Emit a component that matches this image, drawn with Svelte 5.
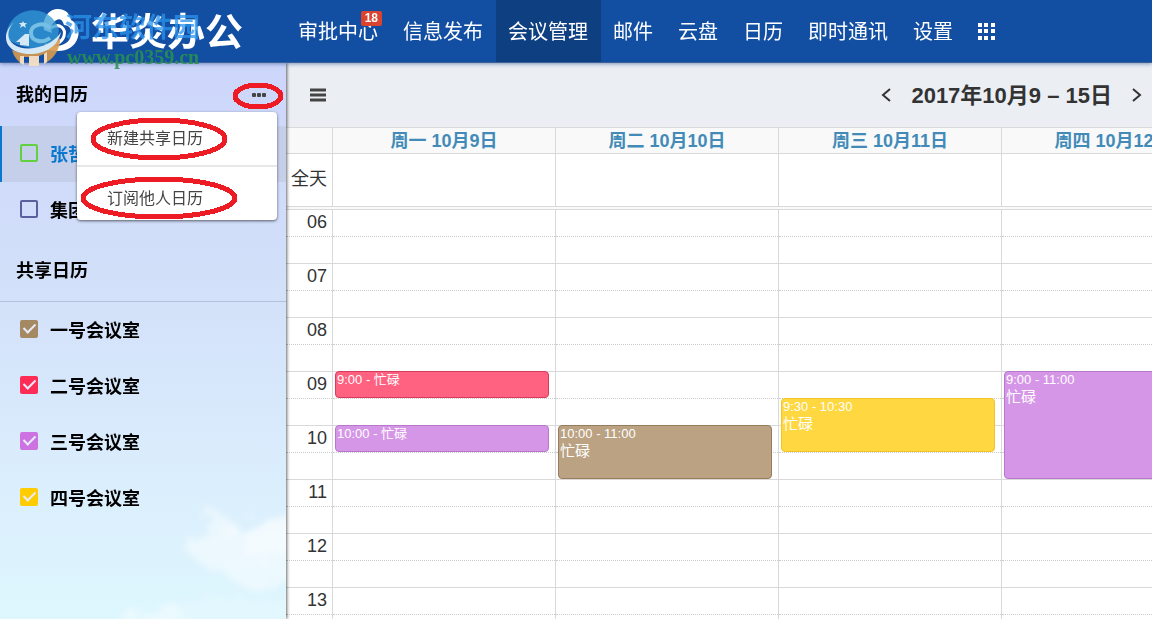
<script>
    const navItems = [
        { label: '审批中心', badge: 18 },
        { label: '信息发布' },
        { label: '会议管理', active: true },
        { label: '邮件' },
        { label: '云盘' },
        { label: '日历' },
        { label: '即时通讯' },
        { label: '设置' }
    ];

    let mine = $state([
        { name: '张哲', color: '#62d13f', checked: false, active: true },
        { name: '集团', color: '#5a5f9e', checked: false }
    ]);

    let shared = $state([
        { name: '一号会议室', color: '#a58963', checked: true },
        { name: '二号会议室', color: '#ff2d55', checked: true },
        { name: '三号会议室', color: '#cc73e1', checked: true },
        { name: '四号会议室', color: '#ffcc00', checked: true }
    ]);

    let menuOpen = $state(true);

    const firstHour = 6;
    const hours = ['06', '07', '08', '09', '10', '11', '12', '13', '14'];
    const hourHeight = 54;

    // start / end are in hours
    const days = [
        {
            title: '周一 10月9日',
            events: [
                { time: '9:00 - 忙碌', start: 9, end: 9.5, kind: 'red' },
                { time: '10:00 - 忙碌', start: 10, end: 10.5, kind: 'purple' }
            ]
        },
        {
            title: '周二 10月10日',
            events: [{ time: '10:00 - 11:00', title: '忙碌', start: 10, end: 11, kind: 'brown' }]
        },
        {
            title: '周三 10月11日',
            events: [{ time: '9:30 - 10:30', title: '忙碌', start: 9.5, end: 10.5, kind: 'yellow' }]
        },
        {
            title: '周四 10月12日',
            events: [{ time: '9:00 - 11:00', title: '忙碌', start: 9, end: 11, kind: 'purple' }]
        }
    ];

    // events cover the hour line they start on
    const top = (e) => (e.start - firstHour) * hourHeight - 1;
    const height = (e) => (e.end - e.start) * hourHeight;
</script>

<div class="app">
    <header class="topbar">
        <div class="brand">
            <svg class="brand-icon" width="84" height="70" viewBox="0 0 84 70" aria-hidden="true">
                <path d="M44 30 C42 16 50 9 58 9 C66 9 70 14 71 20 C77 23 80 30 78 37 C75 47 67 51 58 51 L46 50 L50 46 C62 47 70 43 71 35 C72 29 69 25 64 25 C62 18 58 18 54 22 C51 25 51 29 52 33 Z" fill="#fff" />
                <path d="M51 28 C60 22 66 29 64 36 C62 43 54 46 45 45" fill="none" stroke="#fff" stroke-width="3" />
                <path d="M6 38 A27 27 0 0 1 59 30 L57 43 C42 51 22 50 6 38 Z" fill="#3399d5" opacity=".75" />
                <path d="M12 50 C27 57 47 51 60 38 A27 27 0 0 1 47 62 L44 64 V54 L39 56 V66 H29 V57 L24 57 V65 C18 62 14 57 12 50 Z" fill="#d99a4b" opacity=".9" />
                <path d="M29 56 H39 V66 H29 Z M20 56 H24 V65 L20 63 Z M44 54 L47 52 V62 L44 64 Z" fill="#f3e3cf" opacity=".9" />
                <path d="M14 22 C0 38 14 51 34 48 C47 46 57 39 61 32 C58 47 44 55 27 54 C6 53 -1 36 14 22 Z" fill="#d5e8f6" />
                <path d="M16 42 L25 34 H29 V46 L20 45 V42 Z" fill="#d5e8f6" />
                <path d="M50 28 C43 21 31 25 31 33 C31 41 42 44 50 38" fill="none" stroke="#74bfe3" stroke-width="4" />
                <path d="M23 21 l1 2 3 0 -2 2 1 3 -3 -2 -3 2 1 -3 -2 -2 3 0 Z" fill="#d5e8f6" />
            </svg>
            <span class="brand-name">华炎办公</span>
            <span class="mark-name">河东软件园</span>
            <span class="mark-url">www.pc0359.cn</span>
        </div>
        <nav>
            {#each navItems as item}
                <a href="#top" class:active={item.active}>
                    {item.label}
                    {#if item.badge}<span class="badge">{item.badge}</span>{/if}
                </a>
            {/each}
            <button class="apps" aria-label="应用">
                <svg width="17" height="17" viewBox="0 0 17 17" fill="#fff">
                    {#each [0, 6, 13] as y}
                        {#each [0, 6, 13] as x}
                            <rect {x} {y} width="4" height="4" />
                        {/each}
                    {/each}
                </svg>
            </button>
        </nav>
    </header>

    <div class="body">
        <aside>
            <svg class="clouds" viewBox="0 0 286 130" aria-hidden="true">
                <defs>
                    <filter id="soft" x="-20%" y="-20%" width="140%" height="140%">
                        <feTurbulence type="fractalNoise" baseFrequency=".06" numOctaves="5" seed="4" />
                        <feDisplacementMap in="SourceGraphic" scale="34" />
                        <feGaussianBlur stdDeviation="3" />
                    </filter>
                </defs>
                <g fill="#fff" filter="url(#soft)">
                    <path d="M202 40 C206 20 222 18 232 34 C242 46 250 36 266 30 C280 18 294 22 304 26 V90 C274 90 262 112 246 100 C226 86 206 78 190 66 Z" opacity=".45" />
                    <path d="M236 46 C254 36 274 28 304 28 V60 C274 64 252 70 236 62 Z" opacity=".4" />
                    <path d="M120 140 C130 122 144 126 158 116 C176 110 188 120 184 140 Z" opacity=".4" />
                    <path d="M180 140 V112 C220 106 260 112 304 104 V140 Z" opacity=".15" />
                </g>
            </svg>

            <div class="section">
                <h2>我的日历</h2>
                <button class="more" aria-label="更多" onclick={() => (menuOpen = !menuOpen)}>
                    <svg width="15" height="4" viewBox="0 0 15 4" fill="#444">
                        <rect width="4" height="4" rx="1" />
                        <rect x="5" width="4" height="4" rx="1" />
                        <rect x="10" width="4" height="4" rx="1" />
                    </svg>
                </button>
            </div>
            {#each mine as cal}
                <label class="calendar" class:active={cal.active}>
                    <input type="checkbox" bind:checked={cal.checked} style="--color: {cal.color}" />
                    {cal.name}
                </label>
            {/each}

            <div class="section lined">
                <h2>共享日历</h2>
            </div>
            {#each shared as cal}
                <label class="calendar">
                    <input type="checkbox" bind:checked={cal.checked} style="--color: {cal.color}" />
                    {cal.name}
                </label>
            {/each}

            {#if menuOpen}
                <div class="menu">
                    <button>新建共享日历</button>
                    <hr />
                    <button>订阅他人日历</button>
                </div>
                <svg class="rings" width="286" height="160" viewBox="0 0 286 160" aria-hidden="true">
                    <ellipse cx="258" cy="33" rx="23" ry="11" />
                    <ellipse cx="159" cy="76" rx="66" ry="19" />
                    <ellipse cx="159" cy="135" rx="76" ry="19" />
                </svg>
            {/if}
        </aside>

        <main>
            <div class="toolbar">
                <button aria-label="菜单">
                    <svg width="16" height="14" viewBox="0 0 16 14" stroke="#444" stroke-width="3">
                        <path d="M0 2 H16 M0 7 H16 M0 12 H16" stroke-linecap="butt" />
                    </svg>
                </button>
                <div class="range">
                    <button aria-label="上一周">
                        <svg width="10" height="14" viewBox="0 0 10 14"><path d="M9 1 L2 7 L9 13" /></svg>
                    </button>
                    <h1>2017年10月9 – 15日</h1>
                    <button aria-label="下一周">
                        <svg width="10" height="14" viewBox="0 0 10 14"><path d="M1 1 L8 7 L1 13" /></svg>
                    </button>
                </div>
            </div>

            <div class="week">
                <div class="row heads">
                    <div class="axis"></div>
                    {#each days as day}
                        <div class="head">{day.title}</div>
                    {/each}
                </div>
                <div class="row allday">
                    <div class="axis">全天</div>
                    {#each days as day}
                        <div class="cell"></div>
                    {/each}
                </div>
                <div class="divider"></div>
                <div class="row times">
                    <div class="axis">
                        {#each hours as hour}
                            <div class="hour">{hour}</div>
                        {/each}
                    </div>
                    {#each days as day}
                        <div class="day">
                            {#each hours as hour}
                                <div class="hour"></div>
                            {/each}
                            {#each day.events as event}
                                <div class="event {event.kind}" style="top: {top(event)}px; height: {height(event)}px">
                                    <div class="event-time">{event.time}</div>
                                    {#if event.title}<div class="event-title">{event.title}</div>{/if}
                                </div>
                            {/each}
                        </div>
                    {/each}
                </div>
            </div>
        </main>
    </div>
</div>

<style>
    .app {
        height: 100vh;
        display: flex;
        flex-direction: column;
        overflow: hidden;
        font-family: "Liberation Sans", "Noto Sans CJK SC", sans-serif;
        color: #333;
    }

    button {
        padding: 0;
        border: none;
        background: none;
        font: inherit;
        color: inherit;
        cursor: pointer;
    }

    svg {
        display: block;
    }

    h1, h2 {
        margin: 0;
    }

    /* TOP BAR */

    .topbar {
        position: relative;
        z-index: 2;
        flex: none;
        display: flex;
        height: 63px;
        box-sizing: border-box;
        border-bottom: 1px solid #3c6197;
        background: #124fa2;
        box-shadow: 0 1px 4px rgba(20, 60, 130, .5);
    }

    .brand {
        position: relative;
        flex: none;
        width: 286px;
    }

    .brand span {
        position: absolute;
        white-space: nowrap;
    }

    .brand-icon {
        position: absolute;
        top: 0;
        left: 0;
    }

    .brand .brand-name {
        left: 91px;
        top: 7px;
        font-size: 38px;
        line-height: 50px;
        font-weight: bold;
        color: #fff;
    }

    .brand .mark-name {
        left: 65px;
        top: 10px;
        font-size: 27px;
        line-height: 36px;
        font-weight: bold;
        color: #2a93ee;
        opacity: .75;
    }

    .brand .mark-url {
        left: 67px;
        top: 46px;
        font: bold 20px/22px "Liberation Serif", serif;
        color: #28924c;
        opacity: .85;
    }

    nav {
        display: flex;
    }

    nav a {
        position: relative;
        padding: 2px 13px 0 12px;
        font-size: 20px;
        line-height: 60px;
        color: #fff;
        text-decoration: none;
        white-space: nowrap;
    }

    nav a.active {
        background: #0e3f80;
    }

    .badge {
        position: absolute;
        top: 11px;
        right: 9px;
        padding: 0 4px;
        border-radius: 2px;
        background: #d9432f;
        font-size: 12px;
        line-height: 15px;
        font-weight: bold;
    }

    .apps {
        padding: 0 12px;
    }

    /* SIDEBAR */

    .body {
        flex: 1;
        display: flex;
        min-height: 0;
    }

    aside {
        position: relative;
        z-index: 1;
        flex: none;
        width: 286px;
        background: linear-gradient(#cdd6fb, #d2e0f9 40%, #d9eafc 65%, #def7fe);
        box-shadow: 1px 0 3px rgba(0, 0, 0, .6);
        color: #000;
    }

    .clouds {
        position: absolute;
        left: 0;
        bottom: 0;
        width: 100%;
        z-index: -1;
    }

    .section {
        display: flex;
        align-items: center;
        justify-content: space-between;
        height: 63px;
        padding: 0 19px 0 16px;
        box-sizing: border-box;
    }

    .section.lined {
        height: 64px;
        padding-top: 2px;
        border-bottom: 1px solid #b3c1dc;
    }

    h2 {
        font-size: 18px;
        line-height: 24px;
    }

    .more {
        padding: 6px 0;
    }

    .calendar {
        display: flex;
        align-items: center;
        gap: 12px;
        height: 56px;
        padding: 0 0 3px 20px;
        box-sizing: border-box;
        font-size: 18px;
        font-weight: bold;
    }

    .calendar.active {
        padding-left: 18px;
        border-left: 2px solid #0b78d0;
        background: #c6cfe9;
        color: #0b78d0;
    }

    input {
        appearance: none;
        position: relative;
        width: 18px;
        height: 18px;
        margin: 0;
        box-sizing: border-box;
        border: 2px solid var(--color);
        border-radius: 2px;
    }

    input:checked {
        background: var(--color);
    }

    /* the tick: two sides of a turned box */
    input:checked::after {
        content: "";
        position: absolute;
        left: 4px;
        top: -1px;
        width: 5px;
        height: 10px;
        border: solid #e6ecfa;
        border-width: 0 2px 2px 0;
        transform: rotate(45deg);
    }

    .menu {
        position: absolute;
        top: 49px;
        left: 77px;
        width: 200px;
        height: 108px;
        border-radius: 4px;
        background: #fff;
        box-shadow: 0 1px 3px rgba(0, 0, 0, .6);
        color: #444;
    }

    .menu button {
        display: block;
        width: 100%;
        padding: 6px 0 5px 30px;
        font-size: 16px;
        line-height: 42px;
        text-align: left;
    }

    .menu hr {
        margin: 0;
        border: none;
        border-top: 2px solid #e8e8e8;
    }

    .menu hr + button {
        padding: 11px 0 0 30px;
    }

    .rings {
        position: absolute;
        top: 0;
        left: 0;
        fill: none;
        stroke: #ed1c24;
        stroke-width: 5;
        shape-rendering: crispEdges;
        pointer-events: none;
    }

    /* CALENDAR */

    main {
        flex: 1;
        min-width: 0;
        display: flex;
        flex-direction: column;
        background: #fff;
    }

    .toolbar {
        flex: none;
        display: flex;
        align-items: center;
        justify-content: space-between;
        height: 64px;
        padding: 0 10px 0 24px;
        background: #ebeef3;
    }

    .range {
        display: flex;
        align-items: center;
        gap: 20px;
    }

    .range path {
        fill: none;
        stroke: #333;
        stroke-width: 2;
    }

    h1 {
        padding-top: 2px;
        font-size: 22px;
        line-height: 32px;
        white-space: nowrap;
    }

    .week {
        flex: 1;
        min-height: 0;
        overflow: hidden;
    }

    .row {
        display: grid;
        grid-template-columns: 46px repeat(4, minmax(223px, 1fr));
        border-top: 1px solid #d9d9d9;
    }

    .axis {
        font-size: 18px;
        text-align: right;
    }

    .head,
    .cell,
    .day {
        border-left: 1px solid #d9d9d9;
    }

    .heads {
        height: 25px;
        background: #f9f9f9;
    }

    .head {
        font-size: 18px;
        line-height: 26px;
        font-weight: bold;
        color: #428bb8;
        text-align: center;
    }

    .allday {
        height: 52px;
    }

    .allday .axis {
        padding-right: 5px;
        line-height: 50px;
    }

    .divider {
        height: 2px;
        border-top: 1px solid #d9d9d9;
        background: #f9f9f9;
    }

    .hour {
        position: relative;
        height: 54px;
        padding-right: 5px;
        box-sizing: border-box;
        border-bottom: 1px solid #d9d9d9;
        line-height: 24px;
    }

    .hour::after {
        content: "";
        position: absolute;
        top: 26px;
        left: 0;
        right: 0;
        border-top: 1px dotted #ccc;
    }

    .day {
        position: relative;
    }

    .event {
        position: absolute;
        left: 2px;
        right: 6px;
        padding: 0 1px;
        box-sizing: border-box;
        border: 1px solid;
        border-radius: 4px;
        color: #fff;
    }

    .event-time {
        font-size: 13px;
        line-height: 16px;
    }

    .event-title {
        font-size: 15px;
        line-height: 18px;
    }

    .red {
        background: #ff6180;
        border-color: #d83a5c;
    }

    .purple {
        background: #d696e8;
        border-color: #b777cb;
    }

    .brown {
        background: #baa283;
        border-color: #977d5b;
    }

    .yellow {
        background: #ffd740;
        border-color: #f0c52a;
    }
</style>
